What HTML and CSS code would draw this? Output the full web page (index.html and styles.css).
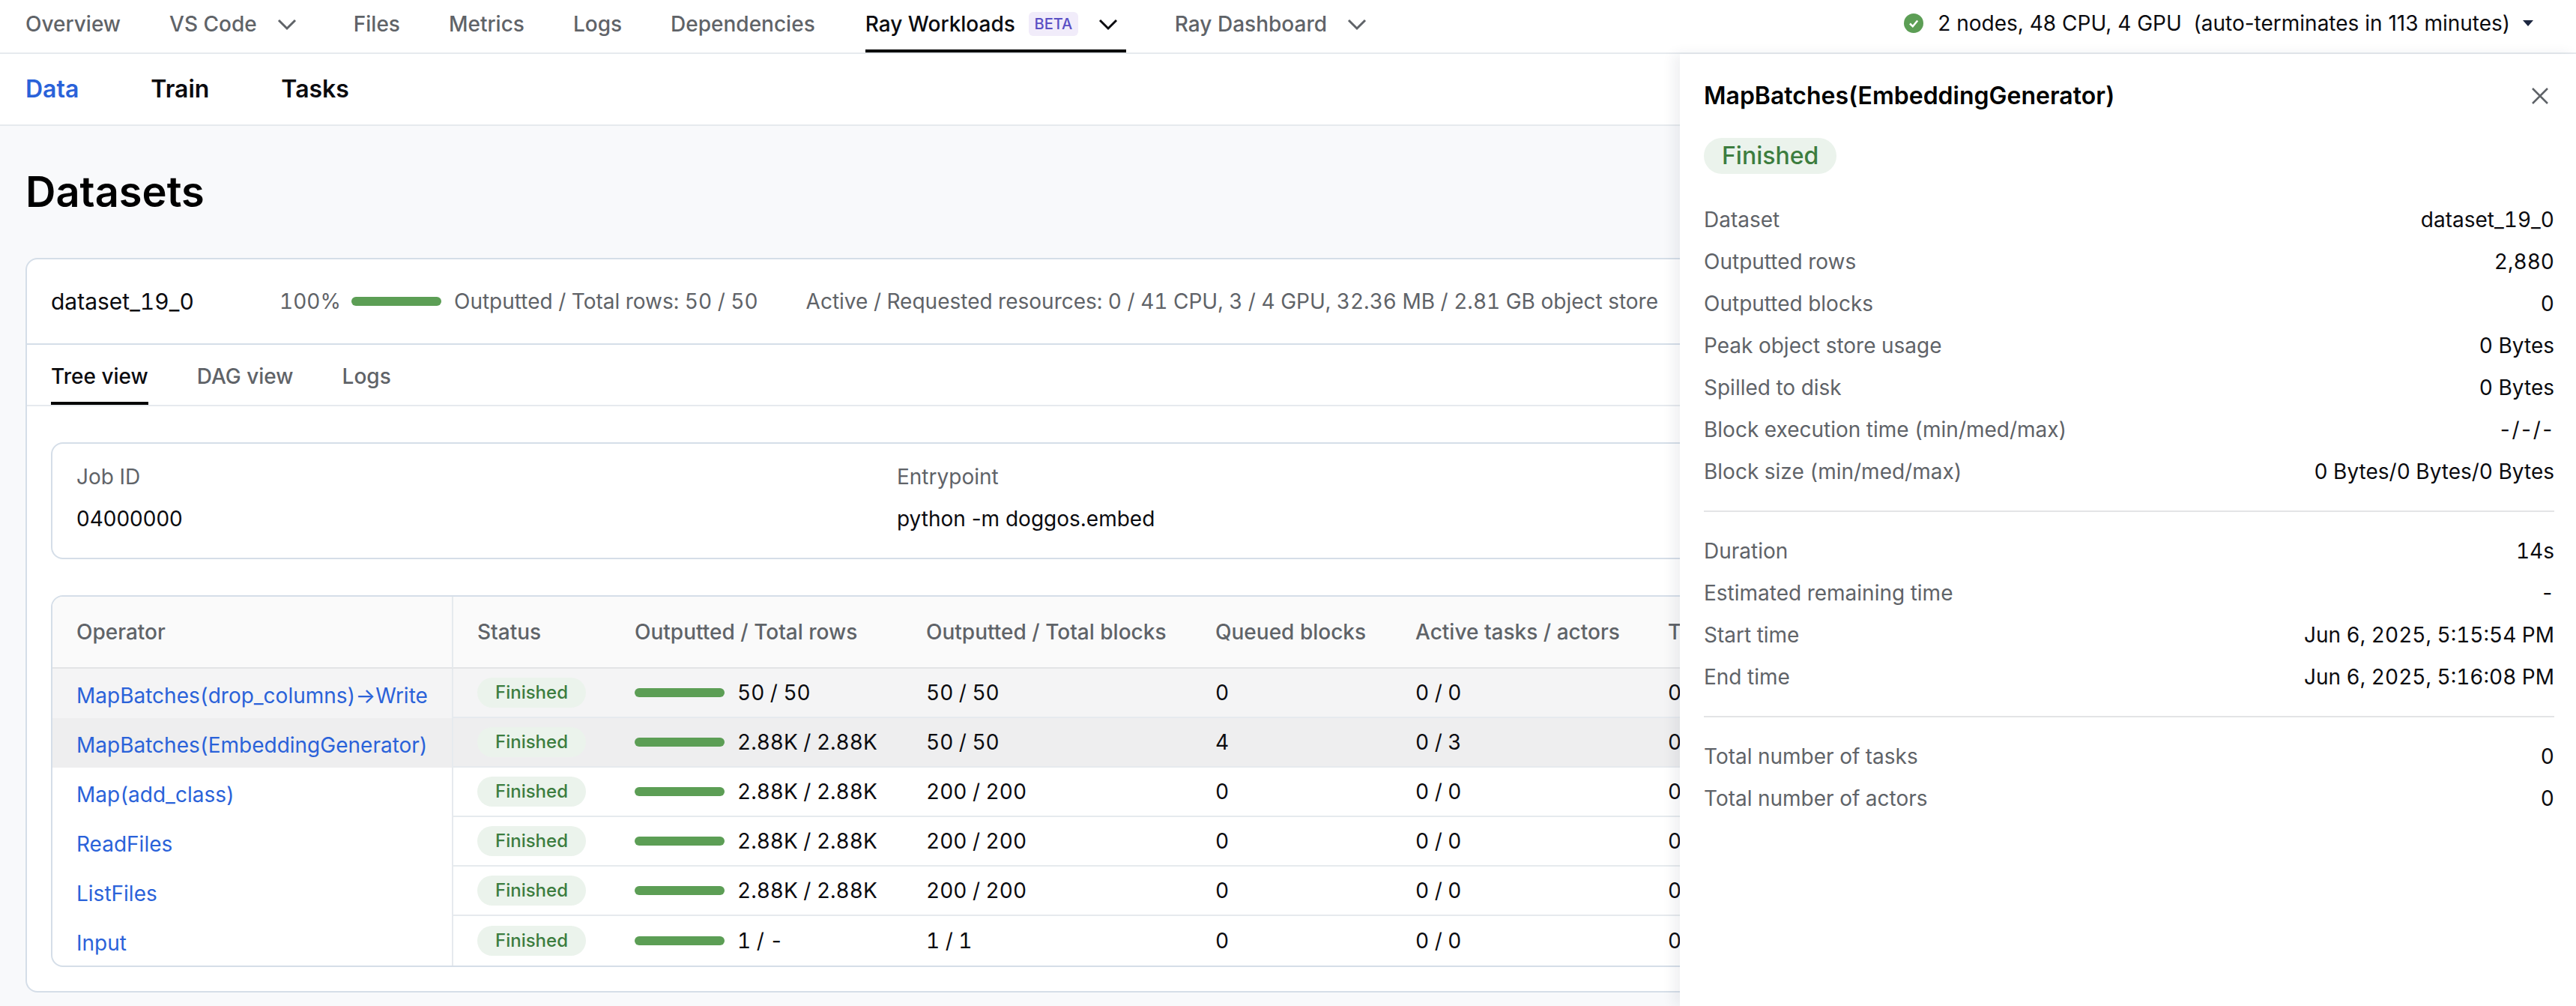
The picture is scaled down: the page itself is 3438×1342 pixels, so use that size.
FILE: index.html
```html
<!DOCTYPE html>
<html lang="en">
<head>
    <meta charset="UTF-8">
    <title>Ray Workloads - Datasets</title>
    <link rel="stylesheet" href="styles.css">
</head>
<body>
    <header class="topnav">
        <a class="topnav-item">Overview</a>
        <a class="topnav-item">VS Code<svg class="chevron" viewBox="0 0 48 48"><polyline points="13,19 24,30 35,19"/></svg></a>
        <a class="topnav-item">Files</a>
        <a class="topnav-item">Metrics</a>
        <a class="topnav-item">Logs</a>
        <a class="topnav-item">Dependencies</a>
        <a class="topnav-item active">Ray Workloads<span class="beta">BETA</span><svg class="chevron" viewBox="0 0 48 48"><polyline points="13,19 24,30 35,19"/></svg></a>
        <a class="topnav-item">Ray Dashboard<svg class="chevron" viewBox="0 0 48 48"><polyline points="13,19 24,30 35,19"/></svg></a>
        <div class="cluster">
            <svg class="check" viewBox="0 0 26 26">
                <circle cx="13" cy="13" r="13"/>
                <polyline points="8,13.5 11.8,17.2 18.2,9.5"/>
            </svg>
            <span>2 nodes, 48 CPU, 4 GPU &nbsp;(auto-terminates in 113 minutes)</span>
            <svg class="caret" viewBox="0 0 14 8"><polygon points="0,0 14,0 7,8"/></svg>
        </div>
    </header>

    <nav class="subnav">
        <a class="subnav-item selected">Data</a>
        <a class="subnav-item">Train</a>
        <a class="subnav-item">Tasks</a>
    </nav>

    <main class="main">
        <h1>Datasets</h1>
        <section class="card">
            <div class="card-head">
                <span class="dataset-name">dataset_19_0</span>
                <span class="muted percent">100%</span>
                <span class="bar"></span>
                <span class="muted rows-total">Outputted / Total rows: 50 / 50</span>
                <span class="muted">Active / Requested resources: 0 / 41 CPU, 3 / 4 GPU, 32.36 MB / 2.81 GB object store</span>
            </div>
            <div class="tabs">
                <a class="tab active">Tree view</a>
                <a class="tab">DAG view</a>
                <a class="tab">Logs</a>
            </div>
            <div class="card-body">
                <div class="job-box">
                    <div class="muted">Job ID</div>
                    <div class="muted">Entrypoint</div>
                    <div class="entry">04000000</div>
                    <div class="entry">python -m doggos.embed</div>
                </div>
                <div class="table-wrap">
                    <table class="ops">
                        <colgroup>
                            <col class="col-op">
                            <col class="col-status">
                            <col class="col-rows">
                            <col class="col-blocks">
                            <col class="col-queued">
                            <col class="col-active">
                            <col>
                        </colgroup>
                        <thead>
                            <tr>
                                <th class="op">Operator</th>
                                <th>Status</th>
                                <th>Outputted / Total rows</th>
                                <th>Outputted / Total blocks</th>
                                <th>Queued blocks</th>
                                <th>Active tasks / actors</th>
                                <th>T</th>
                            </tr>
                        </thead>
                        <tbody>
                            <tr class="root">
                                <td class="op"><a>MapBatches(drop_columns)→Write</a></td>
                                <td><span class="pill">Finished</span></td>
                                <td><div class="progress"><span class="bar"></span>50 / 50</div></td>
                                <td>50 / 50</td>
                                <td>0</td>
                                <td>0 / 0</td>
                                <td>0</td>
                            </tr>
                            <tr class="picked">
                                <td class="op"><a>MapBatches(EmbeddingGenerator)</a></td>
                                <td><span class="pill">Finished</span></td>
                                <td><div class="progress"><span class="bar"></span>2.88K / 2.88K</div></td>
                                <td>50 / 50</td>
                                <td>4</td>
                                <td>0 / 3</td>
                                <td>0</td>
                            </tr>
                            <tr>
                                <td class="op"><a>Map(add_class)</a></td>
                                <td><span class="pill">Finished</span></td>
                                <td><div class="progress"><span class="bar"></span>2.88K / 2.88K</div></td>
                                <td>200 / 200</td>
                                <td>0</td>
                                <td>0 / 0</td>
                                <td>0</td>
                            </tr>
                            <tr>
                                <td class="op"><a>ReadFiles</a></td>
                                <td><span class="pill">Finished</span></td>
                                <td><div class="progress"><span class="bar"></span>2.88K / 2.88K</div></td>
                                <td>200 / 200</td>
                                <td>0</td>
                                <td>0 / 0</td>
                                <td>0</td>
                            </tr>
                            <tr>
                                <td class="op"><a>ListFiles</a></td>
                                <td><span class="pill">Finished</span></td>
                                <td><div class="progress"><span class="bar"></span>2.88K / 2.88K</div></td>
                                <td>200 / 200</td>
                                <td>0</td>
                                <td>0 / 0</td>
                                <td>0</td>
                            </tr>
                            <tr>
                                <td class="op"><a>Input</a></td>
                                <td><span class="pill">Finished</span></td>
                                <td><div class="progress"><span class="bar"></span>1 / -</div></td>
                                <td>1 / 1</td>
                                <td>0</td>
                                <td>0 / 0</td>
                                <td>0</td>
                            </tr>
                        </tbody>
                    </table>
                </div>
            </div>
        </section>
    </main>

    <!-- side drawer, lies over the table -->
    <aside class="drawer">
        <div class="drawer-head">
            <h2>MapBatches(EmbeddingGenerator)</h2>
            <svg class="close" viewBox="0 0 22 22"><path d="M1 1 21 21M21 1 1 21"/></svg>
        </div>
        <span class="pill pill-large">Finished</span>
        <dl class="facts">
            <div><dt>Dataset</dt><dd>dataset_19_0</dd></div>
            <div><dt>Outputted rows</dt><dd>2,880</dd></div>
            <div><dt>Outputted blocks</dt><dd>0</dd></div>
            <div><dt>Peak object store usage</dt><dd>0 Bytes</dd></div>
            <div><dt>Spilled to disk</dt><dd>0 Bytes</dd></div>
            <div><dt>Block execution time (min/med/max)</dt><dd>-/-/-</dd></div>
            <div><dt>Block size (min/med/max)</dt><dd>0 Bytes/0 Bytes/0 Bytes</dd></div>
        </dl>
        <hr>
        <dl class="facts">
            <div><dt>Duration</dt><dd>14s</dd></div>
            <div><dt>Estimated remaining time</dt><dd>-</dd></div>
            <div><dt>Start time</dt><dd>Jun 6, 2025, 5:15:54 PM</dd></div>
            <div><dt>End time</dt><dd>Jun 6, 2025, 5:16:08 PM</dd></div>
        </dl>
        <hr>
        <dl class="facts">
            <div><dt>Total number of tasks</dt><dd>0</dd></div>
            <div><dt>Total number of actors</dt><dd>0</dd></div>
        </dl>
    </aside>
</body>
</html>
```

FILE: styles.css
```css
* {
    box-sizing: border-box;
}

html,
body {
    margin: 0;
    height: 100%;
}

body {
    position: relative;
    overflow: hidden;
    font-family: Inter, "Liberation Sans", sans-serif;
    font-variant-numeric: tabular-nums;
    font-size: 28px;
    line-height: 40px;
    color: #0b0b0f;
    background-color: #f8f9fb;
}

.muted {
    color: #5f6368;
}

/* top bar */
.topnav {
    display: flex;
    align-items: stretch;
    gap: 65px;
    height: 72px;
    padding: 0 57px 0 34px;
    background-color: #ffffff;
    border-bottom: 2px solid #e6eaee;
}

.topnav-item {
    display: flex;
    align-items: center;
    height: 70px;
    padding-bottom: 6px;
    font-weight: 500;
    color: #5f6368;
    white-space: nowrap;
}

.topnav-item.active {
    margin-left: 2px;
    padding-bottom: 2px;
    color: #0b0b0f;
    border-bottom: 4px solid #000000;
}

.beta {
    display: inline-block;
    width: 66px;
    height: 32px;
    margin-left: 18px;
    border-radius: 6px;
    font-size: 20px;
    line-height: 32px;
    text-align: center;
    color: #5a4fc4;
    background-color: #f1ecfa;
}

.chevron {
    width: 48px;
    height: 48px;
    margin-left: 16px;
    fill: none;
    stroke: currentColor;
    stroke-width: 3;
}

.cluster {
    display: flex;
    align-items: center;
    margin-left: auto;
    margin-top: -8px;
    font-variant-numeric: normal;
}

.check {
    width: 26px;
    height: 26px;
    margin-right: 19px;
    fill: #5c9e55;
}

.check polyline {
    fill: none;
    stroke: #ffffff;
    stroke-width: 2.5;
}

.caret {
    width: 14px;
    height: 8px;
    margin-left: 17px;
    fill: #1c2740;
}

/* second bar */
.subnav {
    display: flex;
    align-items: center;
    gap: 96px;
    height: 96px;
    padding: 0 34px;
    background-color: #ffffff;
    border-bottom: 2px solid #e6eaee;
    font-size: 32px;
    font-weight: 600;
}

.subnav-item.selected {
    color: #2a62d9;
}

.main {
    padding: 56px 34px 0;
}

h1 {
    margin: 0 0 56px;
    font-size: 56px;
    line-height: 64px;
    font-weight: 600;
    color: #000000;
}

.card {
    border: 2px solid #d5dee8;
    border-radius: 16px;
    background-color: #ffffff;
}

.card-head {
    display: flex;
    align-items: center;
    height: 114px;
    padding: 0 32px;
    border-bottom: 2px solid #d5dee8;
    white-space: pre;
}

.dataset-name {
    width: 305px;
    font-size: 30px;
}

.percent {
    margin-right: 14px;
}

.rows-total {
    margin: 0 64px 0 17px;
}

.bar {
    display: inline-block;
    flex: none;
    width: 120px;
    height: 12px;
    border-radius: 6px;
    background-color: #5c9e55;
}

.tabs {
    display: flex;
    gap: 65px;
    height: 82px;
    padding: 0 32px;
    border-bottom: 2px solid #e6eaee;
}

.tab {
    height: 80px;
    padding-top: 22px;
    font-weight: 500;
    color: #5f6368;
}

.tab.active {
    color: #0b0b0f;
    border-bottom: 4px solid #000000;
}

.card-body {
    padding: 48px 32px 32px;
}

.job-box {
    display: grid;
    grid-template-columns: 1095px 1fr;
    align-content: start;
    row-gap: 16px;
    height: 156px;
    padding: 24px 32px;
    margin-bottom: 48px;
    border: 2px solid #d5dee8;
    border-radius: 16px;
}

.entry {
    font-variant-numeric: normal;
}

.table-wrap {
    border: 2px solid #d5dee8;
    border-radius: 16px;
    overflow: hidden;
}

.ops {
    width: 100%;
    table-layout: fixed;
    border-collapse: separate;
    border-spacing: 0;
}

.col-op { width: 535px; }
.col-status { width: 210px; }
.col-rows { width: 389px; }
.col-blocks { width: 386px; }
.col-queued { width: 267px; }
.col-active { width: 337px; }

.ops th {
    height: 96px;
    padding: 0 0 0 32px;
    text-align: left;
    font-weight: 500;
    color: #5f6368;
    background-color: #fafafa;
    border-bottom: 2px solid #e3e4e6;
}

.ops td {
    height: 66px;
    padding: 0 0 0 32px;
    border-bottom: 2px solid #e6eaee;
    white-space: nowrap;
}

.ops tbody tr:last-child td {
    border-bottom: none;
}

.ops .op {
    border-right: 2px solid #e6eaee;
}

.ops td.op {
    padding-top: 6px;
    border-bottom: none;
}

.op a {
    color: #2a62d9;
}

.root td {
    background-color: #f4f4f5;
}

.picked td {
    background-color: #eeeeef;
}

.progress {
    display: flex;
    align-items: center;
    gap: 17px;
}

.pill {
    display: block;
    width: fit-content;
    height: 40px;
    padding: 0 24px;
    border-radius: 20px;
    font-size: 24px;
    font-weight: 500;
    line-height: 40px;
    color: #3c7d3f;
    background-color: #ebf3ec;
}

.pill-large {
    height: 48px;
    border-radius: 24px;
    font-size: 32px;
    line-height: 48px;
}

/* drawer */
.drawer {
    position: absolute;
    top: 72px;
    right: 0;
    bottom: 0;
    left: 2242px;
    padding: 32px 29px 0 32px;
    background-color: #ffffff;
    box-shadow: -8px 0 16px rgba(30, 40, 70, 0.07);
}

.drawer-head {
    display: flex;
    align-items: center;
    justify-content: space-between;
    height: 48px;
    margin-bottom: 32px;
}

h2 {
    margin: 0;
    font-size: 32px;
    font-weight: 600;
    color: #000000;
}

.close {
    width: 22px;
    height: 22px;
    margin-right: 8px;
    fill: none;
    stroke: #5f6368;
    stroke-width: 2.5;
}

.facts {
    display: flex;
    flex-direction: column;
    gap: 16px;
    margin: 0;
}

.pill-large + .facts {
    margin-top: 41px;
}

.facts div {
    display: flex;
    justify-content: space-between;
}

.facts dt {
    color: #5f6368;
}

.facts dd {
    margin: 0;
}

hr {
    height: 2px;
    margin: 32px 0;
    border: none;
    background-color: #e3e4e6;
}
```
